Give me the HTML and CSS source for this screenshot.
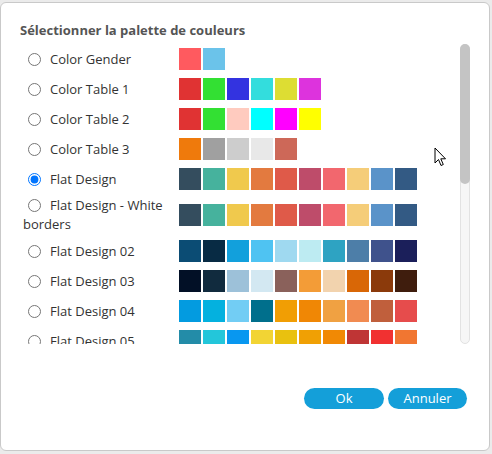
FILE: index.html
```html
<!DOCTYPE html>
<html lang="fr">
<head>
<meta charset="utf-8">
<title>Palette</title>
<link rel="stylesheet" href="styles.css">
</head>
<body>
<div class="dialog">
  <h2 class="title">Sélectionner la palette de couleurs</h2>
  <div class="scroll-wrap">
  <div class="scroll">
    <div class="list">
      <label class="row"><span class="name"><input type="radio" name="p" class="radio">Color Gender</span><span class="sw"><i style="background:#ff5a5f"></i><i style="background:#6bc3ea"></i></span></label>
      <label class="row"><span class="name"><input type="radio" name="p" class="radio">Color Table 1</span><span class="sw"><i style="background:#e03333"></i><i style="background:#33e033"></i><i style="background:#3333e0"></i><i style="background:#33dddd"></i><i style="background:#dddd33"></i><i style="background:#dd33dd"></i></span></label>
      <label class="row"><span class="name"><input type="radio" name="p" class="radio">Color Table 2</span><span class="sw"><i style="background:#e03333"></i><i style="background:#33e033"></i><i style="background:#ffcbbf"></i><i style="background:#00ffff"></i><i style="background:#ff00ff"></i><i style="background:#ffff00"></i></span></label>
      <label class="row"><span class="name"><input type="radio" name="p" class="radio">Color Table 3</span><span class="sw"><i style="background:#ef7a0c"></i><i style="background:#a0a0a0"></i><i style="background:#cdcdcd"></i><i style="background:#e8e8e8"></i><i style="background:#cd6858"></i></span></label>
      <label class="row"><span class="name"><input type="radio" name="p" class="radio" checked>Flat Design</span><span class="sw"><i style="background:#344d5e"></i><i style="background:#46b29d"></i><i style="background:#f0c94d"></i><i style="background:#e37a3f"></i><i style="background:#df5a49"></i><i style="background:#be4c6a"></i><i style="background:#f2676e"></i><i style="background:#f5cd79"></i><i style="background:#5a93c9"></i><i style="background:#335a84"></i></span></label>
      <label class="row"><span class="name"><input type="radio" name="p" class="radio">Flat Design - White borders</span><span class="sw"><i style="background:#344d5e"></i><i style="background:#46b29d"></i><i style="background:#f0c94d"></i><i style="background:#e37a3f"></i><i style="background:#df5a49"></i><i style="background:#be4c6a"></i><i style="background:#f2676e"></i><i style="background:#f5cd79"></i><i style="background:#5a93c9"></i><i style="background:#335a84"></i></span></label>
      <label class="row"><span class="name"><input type="radio" name="p" class="radio">Flat Design 02</span><span class="sw"><i style="background:#0b4c74"></i><i style="background:#082b44"></i><i style="background:#12a0dc"></i><i style="background:#4fc3f2"></i><i style="background:#9fd9f0"></i><i style="background:#bdebf2"></i><i style="background:#2ea3c2"></i><i style="background:#4d7ea8"></i><i style="background:#3f528c"></i><i style="background:#1b1f5a"></i></span></label>
      <label class="row"><span class="name"><input type="radio" name="p" class="radio">Flat Design 03</span><span class="sw"><i style="background:#021026"></i><i style="background:#112b3e"></i><i style="background:#9dc1d9"></i><i style="background:#d3e8f2"></i><i style="background:#8a615b"></i><i style="background:#f39c37"></i><i style="background:#f2d3ae"></i><i style="background:#d96706"></i><i style="background:#8b3a0b"></i><i style="background:#3f1d0d"></i></span></label>
      <label class="row"><span class="name"><input type="radio" name="p" class="radio">Flat Design 04</span><span class="sw"><i style="background:#039be0"></i><i style="background:#04b1df"></i><i style="background:#72cdf4"></i><i style="background:#006f8c"></i><i style="background:#f19e04"></i><i style="background:#f08705"></i><i style="background:#f0a142"></i><i style="background:#f18b51"></i><i style="background:#c05f3c"></i><i style="background:#e64c4c"></i></span></label>
      <label class="row"><span class="name"><input type="radio" name="p" class="radio">Flat Design 05</span><span class="sw"><i style="background:#238ca8"></i><i style="background:#23c6da"></i><i style="background:#0897f0"></i><i style="background:#f2d434"></i><i style="background:#e9c10f"></i><i style="background:#f0a004"></i><i style="background:#f18904"></i><i style="background:#bf3535"></i><i style="background:#f13131"></i><i style="background:#f17631"></i></span></label>
    </div>
  </div>
  <div class="track"><div class="thumb"></div></div>
  </div>
  <div class="footer">
    <button class="btn btn-ok" type="button">Ok</button>
    <button class="btn btn-cancel" type="button">Annuler</button>
  </div>
</div>
<svg class="cursor" width="13" height="20" viewBox="0 0 13 20" aria-hidden="true">
  <path d="M1 1 L1 16 L4.5 12.5 L7 18.5 L9.3 17.5 L6.8 11.8 L11.5 11.8 Z" fill="#fff" stroke="#000" stroke-width="1" stroke-linejoin="miter"/>
</svg>
</body>
</html>
```

FILE: styles.css
```css
html, body {
  margin: 0;
  padding: 0;
}
body {
  width: 492px;
  height: 454px;
  overflow: hidden;
  background: #ebebeb;
  font-family: "Open Sans", "Liberation Sans", sans-serif;
  position: relative;
}
.dialog {
  margin-top: 2px;
  width: 490px;
  height: 449px;
  box-sizing: border-box;
  background: #fff;
  border: 1px solid #c9c9c9;
  border-radius: 6px;
  padding: 18px 19px 0 19px;
  display: flex;
  flex-direction: column;
}
.title {
  margin: 0 0 5px 0;
  font-size: 13px;
  line-height: 18px;
  font-weight: 700;
  color: #555;
}
.scroll-wrap {
  display: flex;
  height: 300px;
}
.scroll {
  flex: 1;
  overflow: hidden;
}
.track {
  width: 10px;
  box-sizing: border-box;
  background: #f6f6f6;
  border: 1px solid #e2e2e2;
  border-radius: 5px;
  position: relative;
}
.thumb {
  position: absolute;
  left: -1px;
  right: -1px;
  top: -1px;
  height: 140px;
  background: #c4c4c4;
  border-radius: 5px;
}
.list {
  padding: 0 0 0 3px;
  display: flex;
  flex-direction: column;
}
.row {
  display: grid;
  grid-template-columns: 156px auto;
  align-items: center;
  padding: 2px 0;
  cursor: pointer;
}
.name {
  font-size: 13px;
  line-height: 19px;
  color: #333;
}
.radio {
  width: 13px;
  height: 13px;
  margin: 0 9px 0 5px;
  vertical-align: -2px;
}
.sw {
  display: flex;
  gap: 2px;
  padding: 2px 0;
}
.sw i {
  display: block;
  width: 22px;
  height: 22px;
}
.footer {
  display: flex;
  justify-content: flex-end;
  gap: 4px;
  margin-top: 44px;
  margin-right: 3px;
}
.btn {
  height: 21px;
  border: none;
  border-radius: 11px;
  background: #149fd9;
  color: #fff;
  font-family: "Open Sans", "Liberation Sans", sans-serif;
  font-size: 13px;
  line-height: 21px;
  padding: 0;
  cursor: pointer;
}
.btn-ok {
  width: 80px;
}
.btn-cancel {
  width: 79px;
}
.cursor {
  position: absolute;
  left: 434px;
  top: 147px;
}
```
